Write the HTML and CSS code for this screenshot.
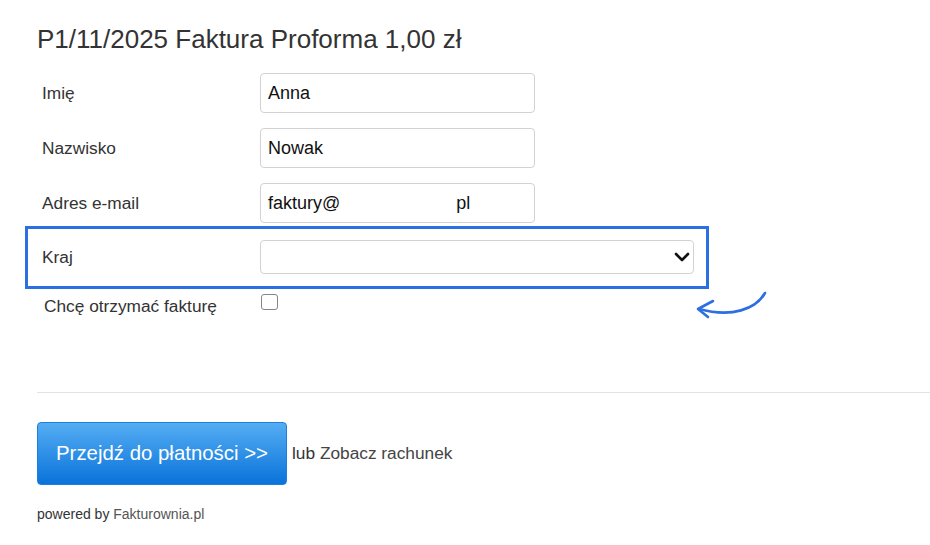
FILE: index.html
```html
<!DOCTYPE html>
<html lang="pl">
<head>
<meta charset="utf-8">
<title>P1/11/2025 Faktura Proforma</title>
<link rel="stylesheet" href="styles.css">
</head>
<body>
<div class="page">
  <h1 class="title">P1/11/2025 Faktura Proforma 1,00 zł</h1>
  <div class="form">
    <div class="row">
      <label class="label">Imię</label>
      <div class="input">Anna</div>
    </div>
    <div class="row">
      <label class="label">Nazwisko</label>
      <div class="input">Nowak</div>
    </div>
    <div class="row row-email">
      <label class="label">Adres e-mail</label>
      <div class="input"><span>faktury@</span><span class="domain">pl</span></div>
    </div>
    <div class="highlight">
      <label class="label">Kraj</label>
      <div class="select">
        <svg class="chevron" width="16" height="10" viewBox="0 0 16 10"><path d="M2 2 L8 8 L14 2" fill="none" stroke="#111" stroke-width="2.6" stroke-linecap="round" stroke-linejoin="round"/></svg>
      </div>
    </div>
    <div class="check-row">
      <label class="check-label">Chcę otrzymać fakturę</label>
      <input class="checkbox" type="checkbox">
    </div>
  </div>
  <div class="divider"></div>
  <div class="actions">
    <a class="pay-button">Przejdź do płatności &gt;&gt;</a>
    <span class="alt">lub <a class="alt-link">Zobacz rachunek</a></span>
  </div>
  <div class="powered">powered by <a class="powered-link">Fakturownia.pl</a></div>
</div>
<svg class="arrow" width="85" height="40" viewBox="0 0 85 40">
  <path d="M75 8 C66 24 42 33 9 24" fill="none" stroke="#2b6fe3" stroke-width="2.6" stroke-linecap="round"/>
  <path d="M23 16 L8 24 L18 32" fill="none" stroke="#2b6fe3" stroke-width="2.6" stroke-linecap="round" stroke-linejoin="round"/>
</svg>
</body>
</html>
```
FILE: styles.css
```css
html, body {
  margin: 0;
  padding: 0;
  background: #fff;
}
body {
  font-family: "Liberation Sans", Arial, sans-serif;
  color: #333;
}
.page {
  padding: 24px 0 0 37px;
}
.title {
  margin: 0;
  font-size: 26px;
  line-height: 30px;
  font-weight: normal;
  color: #333;
}
.form {
  margin-top: 19px;
  display: flex;
  flex-direction: column;
}
.row {
  display: grid;
  grid-template-columns: 223px 275px;
  align-items: center;
  margin-bottom: 15px;
}
.row-email {
  margin-bottom: 3px;
}
.label {
  padding-left: 5px;
  font-size: 17.3px;
  color: #333;
}
.input {
  height: 40px;
  box-sizing: border-box;
  border: 1px solid #d2d2d2;
  border-radius: 4px;
  padding: 0 7px;
  font-size: 18px;
  color: #111;
  display: flex;
  align-items: center;
}
.domain {
  margin-left: 116px;
}
.highlight {
  margin-left: -12px;
  width: 684px;
  box-sizing: border-box;
  border: 3px solid #2b6fe3;
  padding: 11px 12px 12px 14px;
  display: grid;
  grid-template-columns: 218px 1fr;
  align-items: center;
}
.highlight .label {
  padding-left: 0;
}
.select {
  height: 34px;
  box-sizing: border-box;
  border: 1px solid #d2d2d2;
  border-radius: 4px;
  display: flex;
  align-items: center;
  justify-content: flex-end;
  padding-right: 3px;
}
.check-row {
  margin-top: 5px;
  display: grid;
  grid-template-columns: 224px 20px;
  align-items: start;
}
.check-label {
  padding-left: 7px;
  margin-top: 2px;
  font-size: 17.3px;
  line-height: 20px;
  color: #333;
}
.checkbox {
  appearance: none;
  -webkit-appearance: none;
  margin: 0;
  width: 17px;
  height: 16px;
  box-sizing: border-box;
  border: 1.5px solid #858585;
  border-radius: 3px;
  background: #fff;
}
.divider {
  margin-top: 76px;
  border-top: 1px solid #e3e3e3;
}
.actions {
  margin-top: 29px;
  display: flex;
  align-items: center;
  gap: 5px;
}
.pay-button {
  width: 250px;
  height: 63px;
  box-sizing: border-box;
  display: flex;
  align-items: center;
  justify-content: center;
  border: 1px solid #1c7fdc;
  border-radius: 4px;
  background: linear-gradient(#55adf3, #0a73da);
  color: #fff;
  font-size: 20.4px;
  text-decoration: none;
}
.alt {
  font-size: 17.3px;
  color: #333;
}
.alt-link {
  color: #444;
}
.powered {
  margin-top: 21px;
  font-size: 14px;
  line-height: 16px;
  color: #333;
}
.powered-link {
  color: #555;
}
.arrow {
  position: absolute;
  left: 690px;
  top: 285px;
}
```
